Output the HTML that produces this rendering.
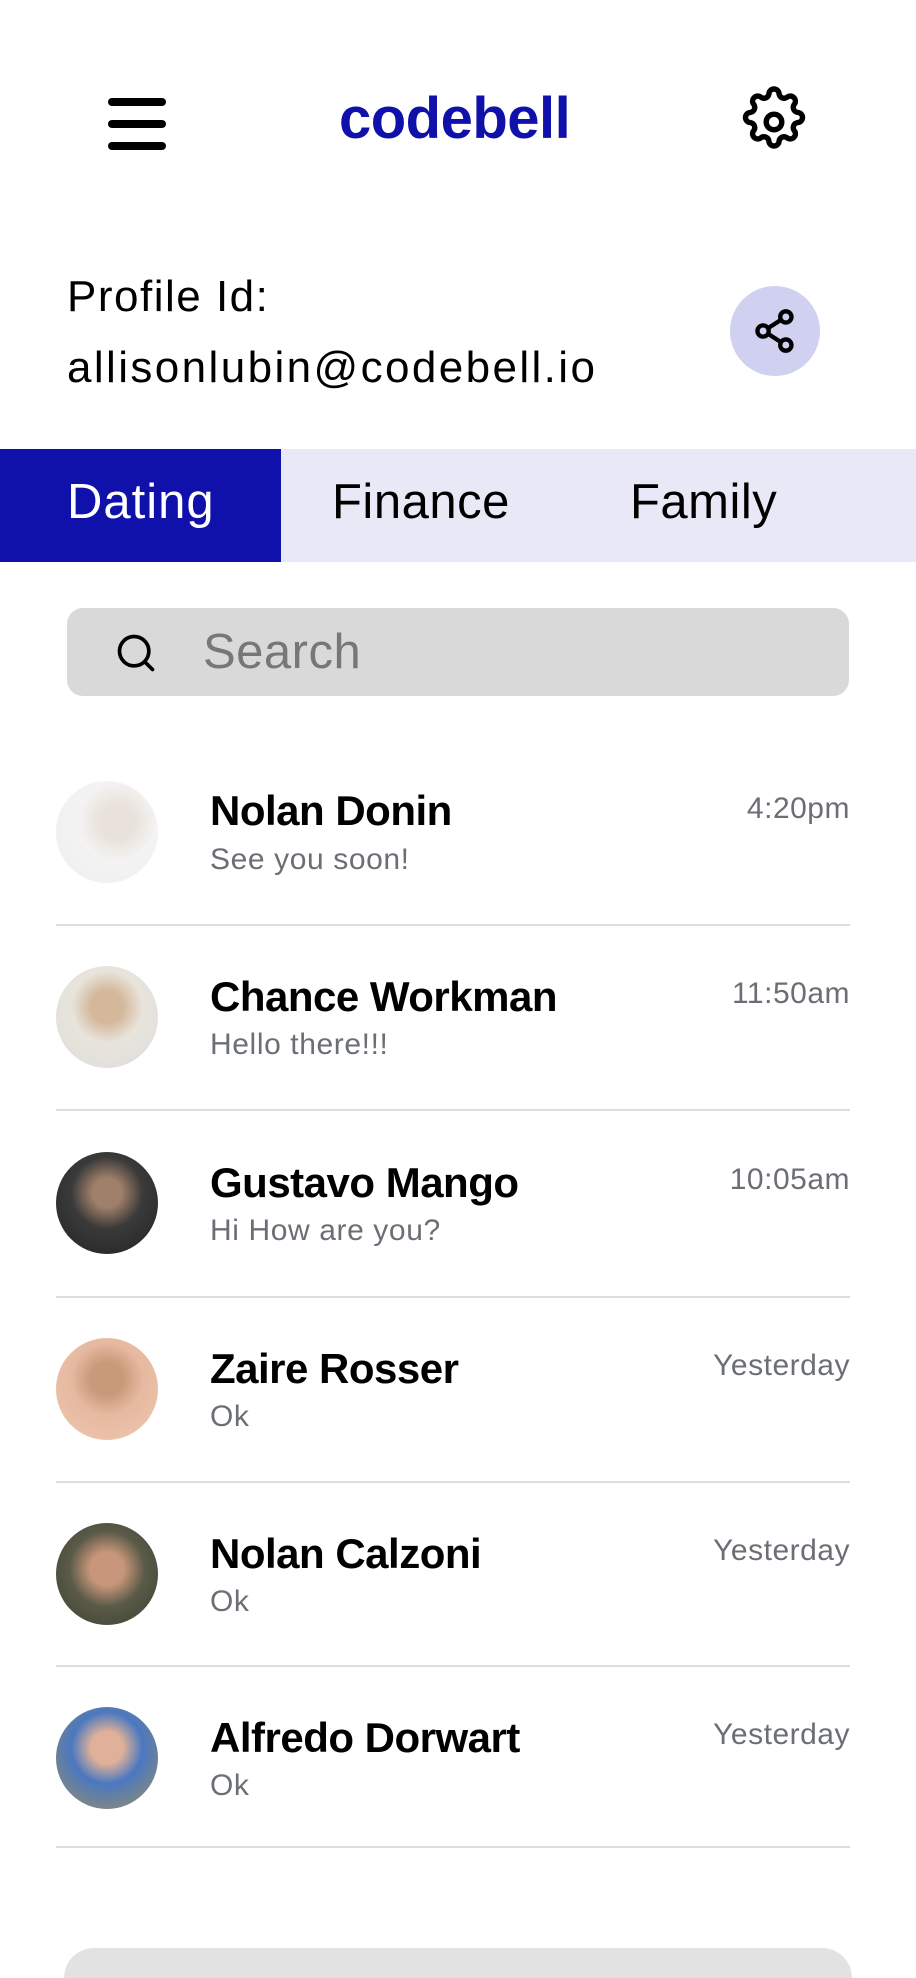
<!DOCTYPE html>
<html><head><meta charset="utf-8"><style>
*{margin:0;padding:0;box-sizing:border-box}
body{width:916px;height:1956px;background:#fff;font-family:"Liberation Sans",sans-serif;position:relative;overflow:hidden}
.a{position:absolute}
.row .av{position:absolute;left:56px;width:102px;height:102px;border-radius:50%}
.nm{position:absolute;left:210px;font-size:42px;font-weight:bold;color:#000;letter-spacing:-0.5px}
.ms{position:absolute;left:210px;font-size:30px;color:#6b6f75;letter-spacing:0.6px}
.tm{position:absolute;right:66px;font-size:30px;color:#6b6f75;letter-spacing:0.5px}
.dv{position:absolute;left:56px;width:794px;height:2px;background:#ddd}
</style></head><body>
<svg class="a" style="left:106px;top:96px" width="62" height="56" viewBox="0 0 62 56"><g stroke="#000" stroke-width="8" stroke-linecap="round"><line x1="6" y1="6" x2="56" y2="6"/><line x1="6" y1="28" x2="56" y2="28"/><line x1="6" y1="50" x2="56" y2="50"/></g></svg>
<div class="a" style="left:339px;top:85px;font-size:58px;font-weight:bold;color:#1010aa;letter-spacing:-0.5px">codebell</div>
<svg class="a" style="left:738px;top:86px" width="72" height="72" viewBox="0 0 24 24" fill="none" stroke="#000" stroke-width="1.8" stroke-linejoin="round"><path d="M10.3 2.7a1.7 1.7 0 0 1 3.4 0 1.7 1.7 0 0 0 2.6 1.1 1.7 1.7 0 0 1 2.4 2.4 1.7 1.7 0 0 0 1.1 2.6 1.7 1.7 0 0 1 0 3.4 1.7 1.7 0 0 0-1.1 2.6 1.7 1.7 0 0 1-2.4 2.4 1.7 1.7 0 0 0-2.6 1.1 1.7 1.7 0 0 1-3.4 0 1.7 1.7 0 0 0-2.6-1.1 1.7 1.7 0 0 1-2.4-2.4 1.7 1.7 0 0 0-1.1-2.6 1.7 1.7 0 0 1 0-3.4 1.7 1.7 0 0 0 1.1-2.6 1.7 1.7 0 0 1 2.4-2.4 1.7 1.7 0 0 0 2.6-1.1z"/><circle cx="12" cy="12" r="2.6"/></svg>
<div class="a" style="left:67px;top:272px;font-size:44px;color:#000;letter-spacing:1.5px">Profile Id:</div>
<div class="a" style="left:67px;top:343px;font-size:44px;color:#000;letter-spacing:2.4px">allisonlubin@codebell.io</div>
<div class="a" style="left:730px;top:286px;width:90px;height:90px;border-radius:50%;background:#d0d0f0"></div>
<svg class="a" style="left:749px;top:305px" width="52" height="52" viewBox="0 0 24 24" fill="none" stroke="#000" stroke-width="2"><circle cx="17" cy="5.5" r="2.6"/><circle cx="6.5" cy="12" r="2.6"/><circle cx="17" cy="18.5" r="2.6"/><line x1="8.8" y1="10.7" x2="14.7" y2="6.9"/><line x1="8.8" y1="13.3" x2="14.7" y2="17.1"/></svg>
<div class="a" style="left:0;top:449px;width:916px;height:113px;background:#e8e8f6"></div>
<div class="a" style="left:0;top:449px;width:281px;height:113px;background:#1010aa"></div>
<div class="a" style="left:67px;top:474px;font-size:49px;color:#fff;letter-spacing:1px">Dating</div>
<div class="a" style="left:332px;top:474px;font-size:49px;color:#000;letter-spacing:0.5px">Finance</div>
<div class="a" style="left:630px;top:474px;font-size:49px;color:#000;letter-spacing:0.5px">Family</div>
<div class="a" style="left:67px;top:608px;width:782px;height:88px;border-radius:16px;background:#d9d9d9"></div>
<svg class="a" style="left:114px;top:631px" width="44" height="44" viewBox="0 0 24 24" fill="none" stroke="#000" stroke-width="2" stroke-linecap="round"><circle cx="11" cy="11" r="8"/><line x1="17" y1="17" x2="21" y2="21"/></svg>
<div class="a" style="left:203px;top:624px;font-size:49px;color:#777;letter-spacing:0.5px">Search</div>

<div class="row">
<div class="av" style="top:781px;background:radial-gradient(circle at 60% 40%,#e9e2da 0 20%,#f3f3f3 45%,#eee)"></div>
<div class="nm" style="top:787px">Nolan Donin</div><div class="ms" style="top:843px">See you soon!</div><div class="tm" style="top:792px">4:20pm</div>
<div class="dv" style="top:924px"></div>

<div class="av" style="top:966px;background:radial-gradient(circle at 50% 40%,#d4b89a 0 20%,#e8e4dc 45%,#ddd)"></div>
<div class="nm" style="top:973px">Chance Workman</div><div class="ms" style="top:1028px">Hello there!!!</div><div class="tm" style="top:977px">11:50am</div>
<div class="dv" style="top:1109px"></div>

<div class="av" style="top:1152px;background:radial-gradient(circle at 50% 40%,#a0806a 0 18%,#3a3a3a 45%,#222)"></div>
<div class="nm" style="top:1159px">Gustavo Mango</div><div class="ms" style="top:1214px">Hi How are you?</div><div class="tm" style="top:1163px">10:05am</div>
<div class="dv" style="top:1296px"></div>

<div class="av" style="top:1338px;background:radial-gradient(circle at 50% 40%,#c89a7a 0 20%,#e6b9a0 45%,#f0c8b0)"></div>
<div class="nm" style="top:1345px">Zaire Rosser</div><div class="ms" style="top:1400px">Ok</div><div class="tm" style="top:1349px">Yesterday</div>
<div class="dv" style="top:1481px"></div>

<div class="av" style="top:1523px;background:radial-gradient(circle at 50% 45%,#c8967a 0 22%,#5a5a48 50%,#3a4030)"></div>
<div class="nm" style="top:1530px">Nolan Calzoni</div><div class="ms" style="top:1585px">Ok</div><div class="tm" style="top:1534px">Yesterday</div>
<div class="dv" style="top:1665px"></div>

<div class="av" style="top:1707px;background:radial-gradient(circle at 50% 40%,#e0b098 0 20%,#4a78c0 45%,#a09060)"></div>
<div class="nm" style="top:1714px">Alfredo Dorwart</div><div class="ms" style="top:1769px">Ok</div><div class="tm" style="top:1718px">Yesterday</div>
<div class="dv" style="top:1846px"></div>
</div>
<div class="a" style="left:64px;top:1948px;width:788px;height:30px;border-radius:30px 30px 0 0;background:#e2e2e2"></div>
</body></html>
